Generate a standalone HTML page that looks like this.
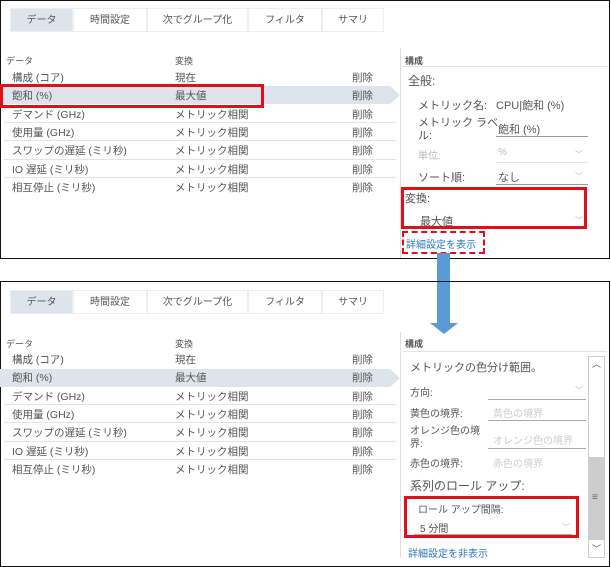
<!DOCTYPE html><html><head><meta charset="utf-8"><style>
body{margin:0;width:611px;height:567px;background:#fff;position:relative;overflow:hidden;font-family:"Liberation Sans","Noto Sans CJK JP",sans-serif;font-size:10px;color:#555}
.a{position:absolute;white-space:nowrap}
.panel{position:absolute;left:0;width:610px;border:1.5px solid #111;box-sizing:border-box}
.tab{position:absolute;height:24px;line-height:24px;text-align:center;background:#fff;border:1px solid #eee;box-sizing:border-box;color:#555}
.sel{background:#dde4ec}
.line{position:absolute;height:1px;background:#e4e4e4}
.red{position:absolute;border:3px solid #e0101a;box-sizing:border-box}
.chev{position:absolute;font-size:8px;color:#bbb}
</style></head><body>
<div class="panel" style="top:0;height:259px"></div>
<div class="tab sel" style="left:10px;top:8px;width:63px">データ</div>
<div class="tab" style="left:73px;top:8px;width:74px">時間設定</div>
<div class="tab" style="left:147px;top:8px;width:101px">次でグループ化</div>
<div class="tab" style="left:248px;top:8px;width:74px">フィルタ</div>
<div class="tab" style="left:322px;top:8px;width:62px">サマリ</div>
<div class="a" style="left:6px;top:54px;font-size:9px">データ</div>
<div class="a" style="left:175px;top:54px;font-size:9px">変換</div>
<div class="a" style="left:400px;top:48px;width:1px;height:210px;background:#ddd"></div>
<div class="line" style="left:402px;top:66px;width:205px"></div>
<div class="a" style="left:0;top:86px;width:390px;height:18px;background:#dde4ec"></div>
<div class="a" style="left:390px;top:86px;width:0;height:0;border-left:10px solid #dde4ec;border-top:9px solid transparent;border-bottom:9px solid transparent"></div>
<div id="rows1"></div>
<div class="red" style="left:0;top:84px;width:264px;height:24px"></div>
<div class="a" style="left:405px;top:54px;font-size:9px;font-weight:bold">構成</div>
<div class="a" style="left:408px;top:72px;font-size:12px">全般:</div>
<div class="a" style="left:418px;top:97px;font-size:11px">メトリック名:</div>
<div class="a" style="left:496px;top:97px;font-size:11px">CPU|飽和 (%)</div>
<div class="a" style="left:418px;top:117px;font-size:11px;line-height:13px">メトリック ラベ<br>ル:</div>
<div class="a" style="left:498px;top:121px;font-size:11px">飽和 (%)</div>
<div class="line" style="left:496px;top:136px;width:92px;background:#999"></div>
<div class="a" style="left:418px;top:147px;font-size:10px;color:#bbb">単位:</div>
<div class="a" style="left:498px;top:147px;font-size:10px;color:#bbb">%</div>
<div class="chev" style="left:575px;top:149px">﹀</div>
<div class="line" style="left:496px;top:162px;width:92px"></div>
<div class="a" style="left:418px;top:169px;font-size:11px">ソート順:</div>
<div class="a" style="left:498px;top:169px;font-size:11px">なし</div>
<div class="chev" style="left:575px;top:171px">﹀</div>
<div class="line" style="left:496px;top:184px;width:92px;background:#999"></div>
<div class="a" style="left:405px;top:190px;font-size:11px">変換:</div>
<div class="a" style="left:420px;top:213px;font-size:11px">最大値</div>
<div class="chev" style="left:575px;top:215px">﹀</div>
<div class="red" style="left:401px;top:187px;width:186px;height:42px"></div>
<div class="a" style="left:402px;top:231px;width:83px;height:23px;border:2.5px dashed #e0101a;box-sizing:border-box"></div>
<div class="a" style="left:406px;top:236px;font-size:10px;color:#2a79b6">詳細設定を表示</div>
<div class="a" style="left:437px;top:253px;width:13px;height:71px;background:#5b9bd5"></div>
<div class="a" style="left:430px;top:323px;width:0;height:0;border-top:11px solid #5b9bd5;border-left:14px solid transparent;border-right:14px solid transparent"></div>
<div class="panel" style="top:281px;height:286px"></div>
<div class="tab sel" style="left:10px;top:290px;width:63px">データ</div>
<div class="tab" style="left:73px;top:290px;width:74px">時間設定</div>
<div class="tab" style="left:147px;top:290px;width:101px">次でグループ化</div>
<div class="tab" style="left:248px;top:290px;width:74px">フィルタ</div>
<div class="tab" style="left:322px;top:290px;width:62px">サマリ</div>
<div class="a" style="left:6px;top:337px;font-size:9px">データ</div>
<div class="a" style="left:175px;top:337px;font-size:9px">変換</div>
<div class="a" style="left:400px;top:332px;width:1px;height:225px;background:#ddd"></div>
<div class="a" style="left:405px;top:337px;font-size:9px;font-weight:bold">構成</div>
<div class="line" style="left:402px;top:351px;width:205px"></div>
<div class="a" style="left:0;top:369px;width:390px;height:18px;background:#dde4ec"></div>
<div class="a" style="left:390px;top:369px;width:0;height:0;border-left:10px solid #dde4ec;border-top:9px solid transparent;border-bottom:9px solid transparent"></div>
<div id="rows2"></div>
<div class="a" style="left:410px;top:359px;font-size:11px">メトリックの色分け範囲。</div>
<div class="a" style="left:410px;top:384px;font-size:10px">方向:</div>
<div class="chev" style="left:575px;top:385px">﹀</div>
<div class="line" style="left:488px;top:399px;width:98px;background:#aaa"></div>
<div class="a" style="left:410px;top:405px;font-size:10px">黄色の境界:</div>
<div class="a" style="left:493px;top:405px;font-size:10px;color:#ccc">黄色の境界</div>
<div class="line" style="left:488px;top:420px;width:98px;background:#aaa"></div>
<div class="a" style="left:410px;top:425px;font-size:10px;line-height:13px">オレンジ色の境<br>界:</div>
<div class="a" style="left:493px;top:432px;font-size:10px;color:#ccc">オレンジ色の境界</div>
<div class="line" style="left:488px;top:448px;width:98px;background:#aaa"></div>
<div class="a" style="left:410px;top:455px;font-size:10px">赤色の境界:</div>
<div class="a" style="left:493px;top:455px;font-size:10px;color:#ccc">赤色の境界</div>
<div class="a" style="left:410px;top:477px;font-size:12px">系列のロール アップ:</div>
<div class="a" style="left:418px;top:501px;font-size:10px">ロール アップ間隔:</div>
<div class="a" style="left:420px;top:520px;font-size:10px">5 分間</div>
<div class="chev" style="left:562px;top:522px">﹀</div>
<div class="line" style="left:414px;top:534px;width:158px;background:#aaa"></div>
<div class="red" style="left:404px;top:496px;width:175px;height:42px"></div>
<div class="a" style="left:408px;top:545px;font-size:10px;color:#2a79b6">詳細設定を非表示</div>
<div class="a" style="left:588px;top:356px;width:17px;height:202px;border:1px solid #ccc;box-sizing:border-box;background:#fff"></div>
<div class="a" style="left:589px;top:457px;width:15px;height:82px;background:#cdcdcd"></div>
<div class="a" style="left:592px;top:357px;font-size:9px;color:#555">︿</div>
<div class="a" style="left:592px;top:492px;font-size:10px;color:#666">≡</div>
<div class="a" style="left:589px;top:539px;width:15px;height:18px;border-top:1px solid #ccc;box-sizing:border-box"></div>
<div class="a" style="left:592px;top:542px;font-size:9px;color:#555">﹀</div>
<script>
var rows=[["構成 (コア)","現在"],["飽和 (%)","最大値"],["デマンド (GHz)","メトリック相関"],["使用量 (GHz)","メトリック相関"],["スワップの遅延 (ミリ秒)","メトリック相関"],["IO 遅延 (ミリ秒)","メトリック相関"],["相互停止 (ミリ秒)","メトリック相関"]];
function build(id,top){var h="";for(var i=0;i<7;i++){var y=top+i*18.3;h+='<div class="a" style="left:12px;top:'+(y-7)+'px;font-size:10.5px">'+rows[i][0]+'</div><div class="a" style="left:175px;top:'+(y-7)+'px;font-size:10.5px">'+rows[i][1]+'</div><div class="a" style="left:352px;top:'+(y-7)+'px;font-size:10.5px">削除</div>';if(i>0&&i!=1&&i!=2)h+='<div class="line" style="left:4px;top:'+(y-10)+'px;width:392px"></div>';}
document.getElementById(id).outerHTML=h;}
build("rows1",77);build("rows2",359);
</script>
</body></html>
